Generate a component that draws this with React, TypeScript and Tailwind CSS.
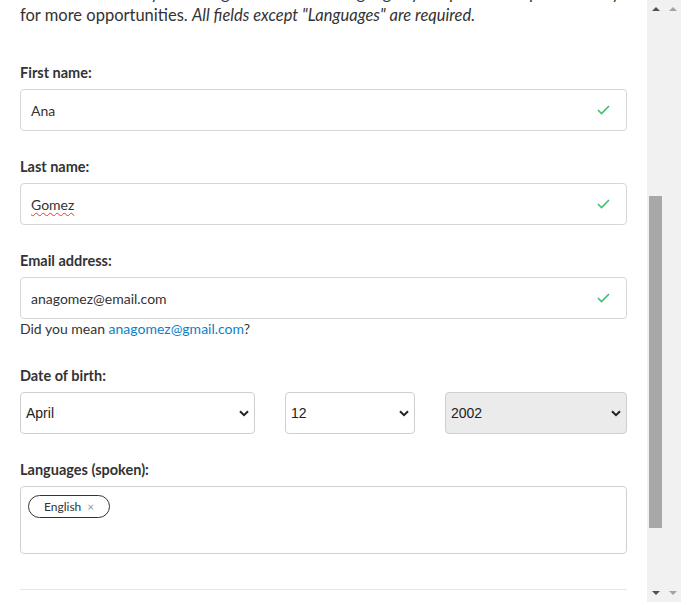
import React from 'react';

const font = { fontFamily: 'Lato, "Open Sans", sans-serif' };

function Check() {
  return (
    <svg width="13" height="10" viewBox="0 0 13 10" className="shrink-0">
      <path d="M1 5 L4.5 8.5 L12 1" fill="none" stroke="#3cc46d" strokeWidth="1.6" />
    </svg>
  );
}

function Chevron() {
  return (
    <svg width="10" height="7" viewBox="0 0 10 7" className="shrink-0">
      <path d="M1 1.2 L5 5.2 L9 1.2" fill="none" stroke="#222" strokeWidth="2" />
    </svg>
  );
}

function Label({ children }: { children: React.ReactNode }) {
  return <div className="h-5 mb-[6px] text-[14.5px] leading-5 font-bold text-[#333]">{children}</div>;
}

function TextField({ label, value, wavy = false }: { label: string; value: string; wavy?: boolean }) {
  return (
    <div>
      <Label>{label}</Label>
      <div className="h-[42px] flex items-center justify-between pl-[10px] pr-[16px] border border-[#d6d6d6] rounded-[4px] bg-white">
        <span
          className={`text-[14px] text-[#333] ${wavy ? 'underline decoration-wavy decoration-[#e53935] decoration-1 underline-offset-2' : ''}`}
        >
          {value}
        </span>
        <Check />
      </div>
    </div>
  );
}

function SelectBox({ value, className = '' }: { value: string; className?: string }) {
  return (
    <div
      className={`h-[42px] flex items-center justify-between pl-[5px] pr-[5px] border border-[#cfcfcf] rounded-[4px] ${className}`}
      style={{ fontFamily: '"Liberation Sans", Arial, sans-serif' }}
    >
      <span className="text-[14px] text-[#222]">{value}</span>
      <Chevron />
    </div>
  );
}

function Scrollbar() {
  return (
    <div className="w-[34px] shrink-0 bg-[#f1f1f1] flex">
      <div className="w-[17px] flex flex-col items-center pt-[7px] pb-[7px]">
        <div className="w-0 h-0 border-l-[4px] border-r-[4px] border-b-[4px] border-l-transparent border-r-transparent border-b-[#505050]" />
        <div className="flex-1 w-full relative">
          <div className="absolute left-[2px] w-[13px] top-[185px] h-[332px] bg-[#a8a8a8]" />
        </div>
        <div className="w-0 h-0 border-l-[4px] border-r-[4px] border-t-[4px] border-l-transparent border-r-transparent border-t-[#505050]" />
      </div>
      <div className="w-[17px] flex flex-col items-center justify-between pt-[7px] pb-[7px]">
        <div className="w-0 h-0 border-l-[4px] border-r-[4px] border-b-[4px] border-l-transparent border-r-transparent border-b-[#a3a3a3]" />
        <div className="w-0 h-0 border-l-[4px] border-r-[4px] border-t-[4px] border-l-transparent border-r-transparent border-t-[#a3a3a3]" />
      </div>
    </div>
  );
}

export default function App() {
  return (
    <div className="w-[681px] h-[602px] flex bg-white overflow-hidden" style={font}>
      <div className="flex-1 px-[20px] overflow-hidden">
        <p className="mt-[-18px] text-[16.5px] leading-[22px] text-[#333] whitespace-nowrap">
          Tell us a bit about your background and the languages you speak to help us match you
          <br />
          for more opportunities. <em>All fields except "Languages" are required.</em>
        </p>

        <div className="mt-[37px] flex flex-col gap-[26px]">
          <TextField label="First name:" value="Ana" />
          <TextField label="Last name:" value="Gomez" wavy />

          <div>
            <TextField label="Email address:" value="anagomez@email.com" />
            <div className="h-[21px] text-[14px] leading-5 text-[#333]">
              Did you mean <span className="text-[#0b7fc7]">anagomez@gmail.com</span>?
            </div>
          </div>

          <div>
            <Label>Date of birth:</Label>
            <div className="flex gap-[30px]">
              <SelectBox value="April" className="w-[235px] bg-white" />
              <SelectBox value="12" className="w-[130px] bg-white" />
              <SelectBox value="2002" className="flex-1 bg-[#ebebeb]" />
            </div>
          </div>

          <div>
            <Label>Languages (spoken):</Label>
            <div className="h-[68px] mt-[2px] flex items-start border border-[#d0d0d0] rounded-[4px] px-[7px] pt-[8px]">
              <span className="inline-flex items-center h-[23px] px-[15px] gap-[6px] border border-[#333] rounded-full text-[12px] text-[#333]">
                English <span className="text-[#999] text-[12px]">×</span>
              </span>
            </div>
          </div>
        </div>

        <div className="mt-[35px] border-t border-[#e6e6e6]" />
      </div>
      <Scrollbar />
    </div>
  );
}
